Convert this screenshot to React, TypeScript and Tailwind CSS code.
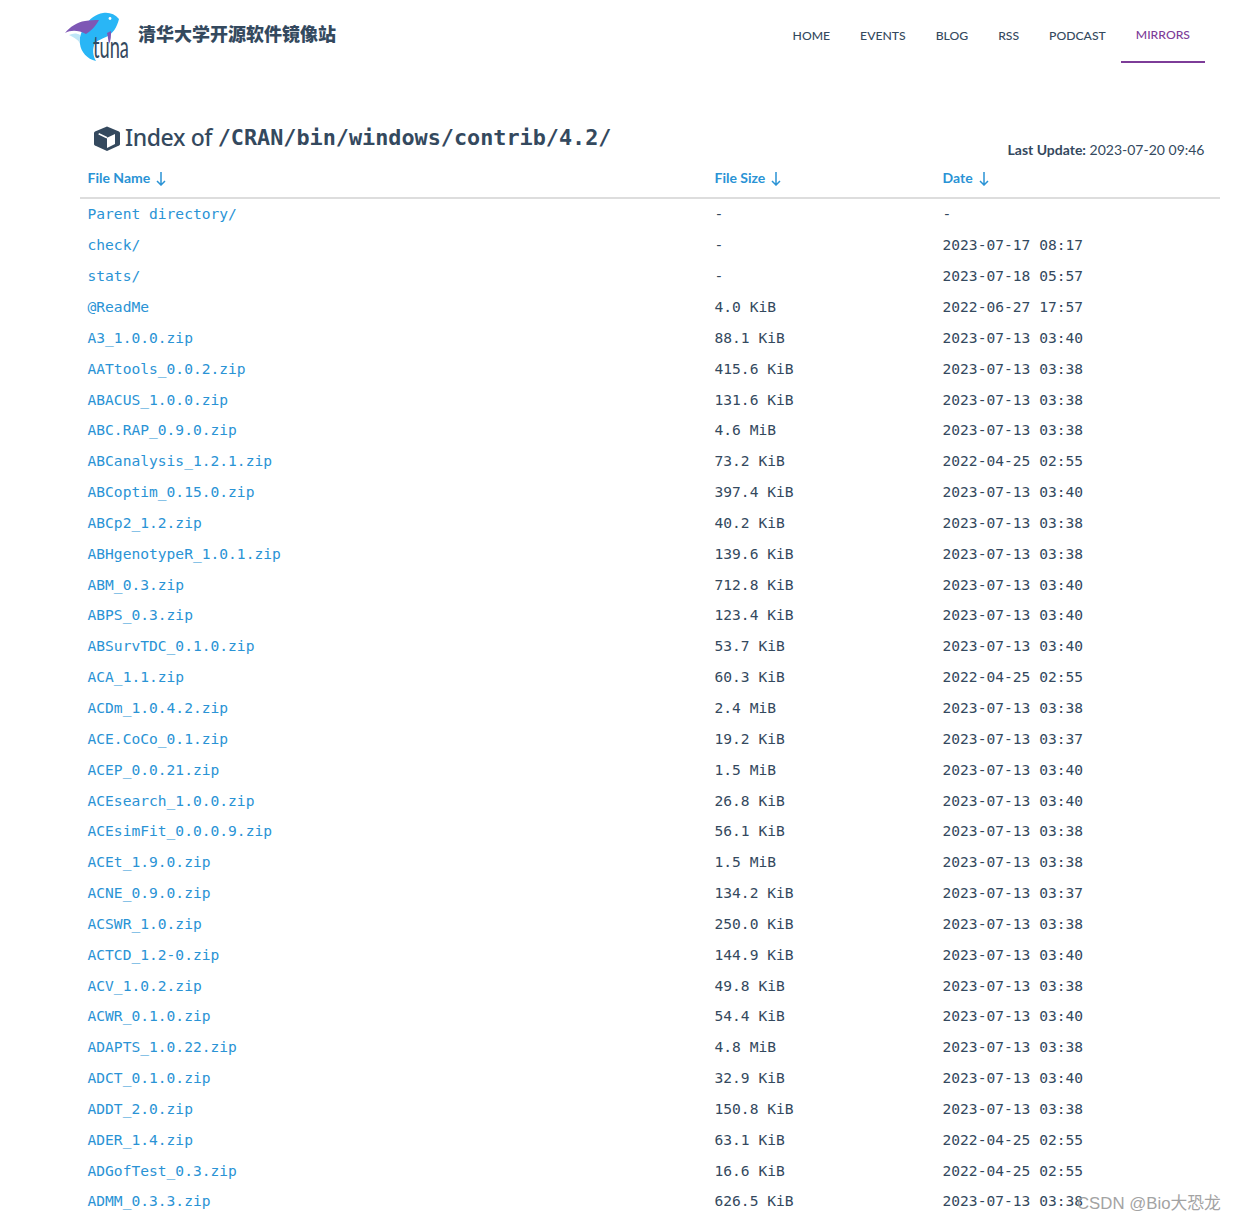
import React from 'react';

const navItems = ['HOME', 'EVENTS', 'BLOG', 'RSS', 'PODCAST', 'MIRRORS'];

const files: [string, string, string][] = [
  ['Parent directory/', '-', '-'],
  ['check/', '-', '2023-07-17 08:17'],
  ['stats/', '-', '2023-07-18 05:57'],
  ['@ReadMe', '4.0 KiB', '2022-06-27 17:57'],
  ['A3_1.0.0.zip', '88.1 KiB', '2023-07-13 03:40'],
  ['AATtools_0.0.2.zip', '415.6 KiB', '2023-07-13 03:38'],
  ['ABACUS_1.0.0.zip', '131.6 KiB', '2023-07-13 03:38'],
  ['ABC.RAP_0.9.0.zip', '4.6 MiB', '2023-07-13 03:38'],
  ['ABCanalysis_1.2.1.zip', '73.2 KiB', '2022-04-25 02:55'],
  ['ABCoptim_0.15.0.zip', '397.4 KiB', '2023-07-13 03:40'],
  ['ABCp2_1.2.zip', '40.2 KiB', '2023-07-13 03:38'],
  ['ABHgenotypeR_1.0.1.zip', '139.6 KiB', '2023-07-13 03:38'],
  ['ABM_0.3.zip', '712.8 KiB', '2023-07-13 03:40'],
  ['ABPS_0.3.zip', '123.4 KiB', '2023-07-13 03:40'],
  ['ABSurvTDC_0.1.0.zip', '53.7 KiB', '2023-07-13 03:40'],
  ['ACA_1.1.zip', '60.3 KiB', '2022-04-25 02:55'],
  ['ACDm_1.0.4.2.zip', '2.4 MiB', '2023-07-13 03:38'],
  ['ACE.CoCo_0.1.zip', '19.2 KiB', '2023-07-13 03:37'],
  ['ACEP_0.0.21.zip', '1.5 MiB', '2023-07-13 03:40'],
  ['ACEsearch_1.0.0.zip', '26.8 KiB', '2023-07-13 03:40'],
  ['ACEsimFit_0.0.0.9.zip', '56.1 KiB', '2023-07-13 03:38'],
  ['ACEt_1.9.0.zip', '1.5 MiB', '2023-07-13 03:38'],
  ['ACNE_0.9.0.zip', '134.2 KiB', '2023-07-13 03:37'],
  ['ACSWR_1.0.zip', '250.0 KiB', '2023-07-13 03:38'],
  ['ACTCD_1.2-0.zip', '144.9 KiB', '2023-07-13 03:40'],
  ['ACV_1.0.2.zip', '49.8 KiB', '2023-07-13 03:38'],
  ['ACWR_0.1.0.zip', '54.4 KiB', '2023-07-13 03:40'],
  ['ADAPTS_1.0.22.zip', '4.8 MiB', '2023-07-13 03:38'],
  ['ADCT_0.1.0.zip', '32.9 KiB', '2023-07-13 03:40'],
  ['ADDT_2.0.zip', '150.8 KiB', '2023-07-13 03:38'],
  ['ADER_1.4.zip', '63.1 KiB', '2022-04-25 02:55'],
  ['ADGofTest_0.3.zip', '16.6 KiB', '2022-04-25 02:55'],
  ['ADMM_0.3.3.zip', '626.5 KiB', '2023-07-13 03:38'],
];

const TunaLogo = () => (
  <svg width="68" height="56" viewBox="0 0 68 56" className="shrink-0">
    <path d="M54 8 C50 3 44 1 38 2 C31 3 24 8 20 15 C16 21 14 27 15 33 C16 41 22 48 31 50 C28 45 27 38 30 32 C33 29 37 28 41 26 C48 23 52 16 54 8 Z" fill="#29b6f6" />
    <path d="M0 22 C5 16 12 11 20 10 C25 9 30 9 34 9 C30 16 26 20 21 23 C13 19 6 19 0 22 Z" fill="#7e57b5" />
    <path d="M4 24 C8 22 12 22 15 24 L15 32 C12 28 8 26 4 24 Z" fill="#bfe6f7" />
    <path d="M42 22 L46 20 C46 25 46 29 44 33 C43 29 43 25 42 22 Z" fill="#7e57b5" />
    <circle cx="45" cy="7.5" r="1.4" fill="#ffffff" />
    <g transform="translate(28 47) scale(0.76 1.25)">
      <text x="0" y="0" fontFamily="Lato, sans-serif" fontSize="24" fill="#34495e">tuna</text>
    </g>
  </svg>
);

const CubeIcon = () => (
  <svg width="26" height="25" viewBox="0 0 26 25" className="mr-[5px] shrink-0">
    <path d="M13 0.5 L25 5.5 Q26 6 26 7 V18 Q26 19 25 19.5 L13 25 L1 19.5 Q0 19 0 18 V7 Q0 6 1 5.5 Z" fill="#34495e" />
    <path d="M13 11.7 L21 8 V18 L13 22 Z" fill="#ffffff" />
    <path d="M4.7 7.7 L13 11.7" stroke="#ffffff" strokeWidth="1.5" />
  </svg>
);

const SortArrow = () => (
  <svg width="10" height="15" viewBox="0 0 10 15" className="ml-[6px] mt-[2px] shrink-0" fill="none" stroke="currentColor" strokeWidth="1.5">
    <path d="M5 1 V14 M1 10 L5 14 L9 10" />
  </svg>
);

export default function App() {
  return (
    <div className="min-h-[1221px] overflow-hidden bg-white font-['Lato',sans-serif] text-[#34495e]">
      <header className="flex h-[63px] items-start justify-between pl-[65px] pr-[31px]">
        <div className="flex items-start pt-[11px]">
          <TunaLogo />
          <span className="ml-[5px] mt-[11px] font-['Noto_Sans_CJK_SC',sans-serif] text-[18px] font-black leading-[22px] text-[#34495e]">
            清华大学开源软件镜像站
          </span>
        </div>
        <nav className="flex h-[63px]">
          {navItems.map((item) => (
            <a
              key={item}
              className={
                item === 'MIRRORS'
                  ? 'flex h-[63px] items-center border-b-2 border-[#7d3c98] px-[15px] pt-[10px] text-[12.2px] font-medium text-[#7d3c98]'
                  : 'flex h-[63px] items-center px-[15px] pt-[10px] text-[12.2px] font-medium text-[#34495e]'
              }
            >
              {item}
            </a>
          ))}
        </nav>
      </header>

      <main className="ml-[80px] mr-[16px] mt-[58px]">
        <div className="flex items-start justify-between pl-[14px] pr-[15.5px]">
          <h1 className="flex h-[34px] items-center leading-[34px]">
            <CubeIcon />
            <span className="mb-[2px] font-['Noto_Sans',sans-serif] text-[23px] font-medium tracking-[-0.4px]">Index of&nbsp;</span>
            <span className="font-['DejaVu_Sans_Mono',monospace] text-[21.8px] font-bold">/CRAN/bin/windows/contrib/4.2/</span>
          </h1>
          <p className="mt-[20px] text-[14px] leading-[18px]">
            <b>Last Update:</b> 2023-07-20 09:46
          </p>
        </div>

        <div className="mt-[1px] grid h-[39px] grid-cols-[627px_228px_1fr] border-b-2 border-[#dddddd] text-[14px] font-bold text-[#2a93d5]">
          {['File Name', 'File Size', 'Date'].map((label) => (
            <div key={label} className="flex items-center pb-[2px] pl-[7.5px]">
              {label}
              <SortArrow />
            </div>
          ))}
        </div>

        <div className="font-['DejaVu_Sans_Mono',monospace] text-[14.6px]">
          {files.map(([name, size, date]) => (
            <div key={name} className="grid h-[30.855px] grid-cols-[627px_228px_1fr] items-center">
              <a className="pl-[7.5px] text-[#2a93d5]">{name}</a>
              <span className="pl-[7.5px]">{size}</span>
              <span className="pl-[7.5px]">{date}</span>
            </div>
          ))}
        </div>
      </main>

      <div className="absolute left-[1077px] top-[1192px] font-['Liberation_Sans','Noto_Sans_CJK_SC',sans-serif] text-[16.8px] leading-[24px] text-[#a3a3a3]">
        CSDN @Bio大恐龙
      </div>
    </div>
  );
}
